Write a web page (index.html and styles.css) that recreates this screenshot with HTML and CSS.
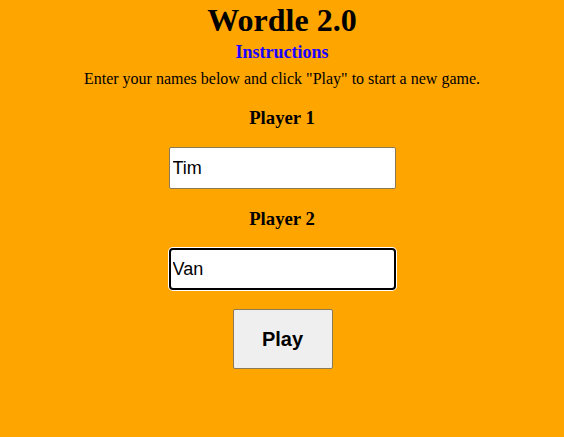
FILE: index.html
```html
<!DOCTYPE html>
<html>
<head>
<meta charset="utf-8">
<link rel="stylesheet" href="styles.css">
</head>
<body>
<div class="page">
  <h1 class="title">Wordle 2.0</h1>
  <a class="instructions" href="#">Instructions</a>
  <p class="intro">Enter your names below and click "Play" to start a new game.</p>
  <h3 class="label">Player 1</h3>
  <input class="name" type="text" value="Tim">
  <h3 class="label">Player 2</h3>
  <input class="name focused" type="text" value="Van">
  <button class="play">Play</button>
</div>
</body>
</html>
```

FILE: styles.css
```css
html, body {
  margin: 0;
  padding: 0;
  background: #ffa500;
  font-family: "Liberation Serif", "Times New Roman", serif;
  color: #000;
}
.page {
  display: flex;
  flex-direction: column;
  align-items: center;
  padding-top: 2px;
}
.title {
  font-size: 32px;
  font-weight: bold;
  margin: 0;
  line-height: 37px;
}
.instructions {
  margin-top: 3px;
  font-size: 18px;
  font-weight: bold;
  color: #1a00ff;
  text-decoration: none;
  line-height: 20px;
}
.intro {
  margin: 8px 0 0;
  font-size: 16px;
  line-height: 18px;
}
.label {
  margin: 19px 0 0;
  font-size: 18.72px;
  font-weight: bold;
  line-height: 22px;
}
.name {
  margin-top: 18px;
  box-sizing: border-box;
  width: 227px;
  height: 42px;
  border: 1px solid #8a7a5a;
  border-radius: 2px;
  background: #fff;
  font-family: "Liberation Sans", Arial, sans-serif;
  font-size: 18px;
  padding: 0 3px;
  color: #000;
  outline: none;
}
.name.focused {
  border: 2px solid #000;
  border-radius: 4px;
  padding: 0 2px;
  box-shadow: 0 0 0 1px #fff;
}
.play {
  margin-top: 19px;
  margin-left: 1px;
  width: 100px;
  height: 60px;
  box-sizing: border-box;
  background: #efefef;
  border: 1px solid #8a7a5a;
  border-radius: 2px;
  font-family: "Liberation Sans", Arial, sans-serif;
  font-size: 20px;
  font-weight: bold;
  color: #000;
}
```
